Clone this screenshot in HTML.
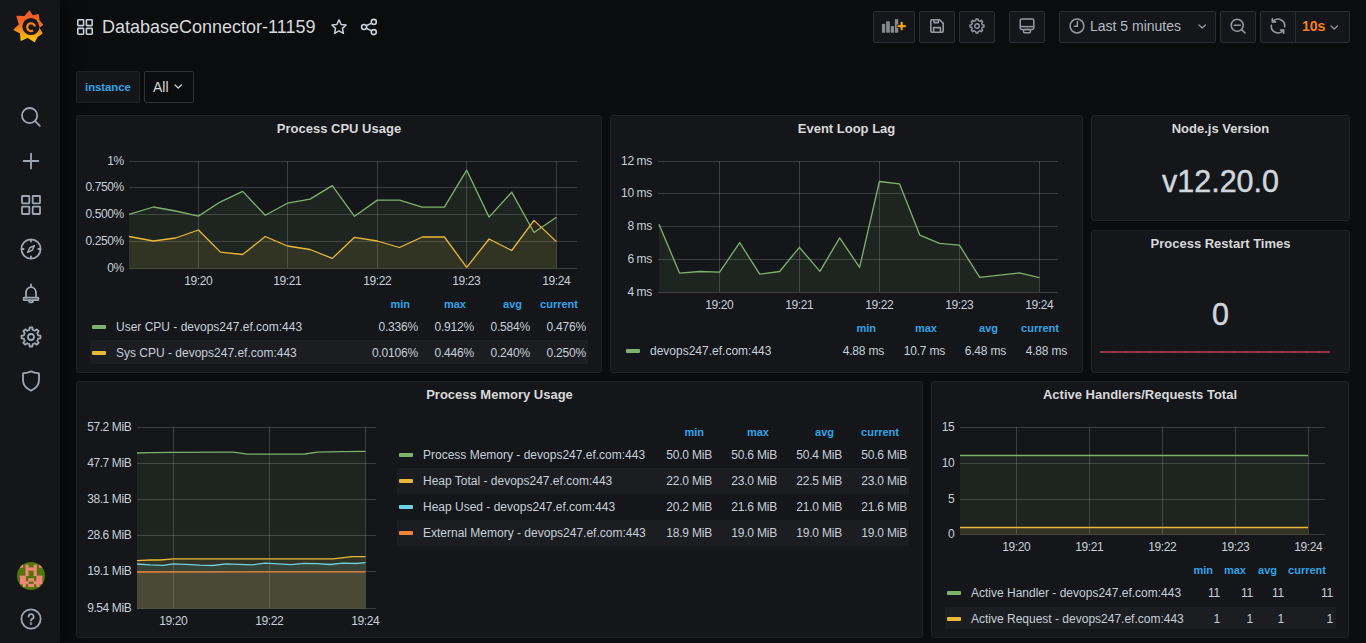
<!DOCTYPE html>
<html><head><meta charset="utf-8"><style>
*{margin:0;padding:0;box-sizing:border-box}
html,body{width:1366px;height:643px;overflow:hidden;background:#0b0c0e;font-family:"Liberation Sans", sans-serif;color:#c7d0d9}
.abs{position:absolute;white-space:nowrap}
.ov{position:absolute;left:0;top:0;pointer-events:none}
.side{position:absolute;left:0;top:0;width:60px;height:643px;background:#141619;box-shadow:0 0 20px rgba(0,0,0,0.7)}
.panel{position:absolute;background:#141619;border:1px solid #202226;border-radius:3px}
.ptitle{position:absolute;left:0;right:0;top:4px;text-align:center;font-size:13px;font-weight:bold;color:#d8d9da;line-height:18px}
.altrow{background:#1b1d21}
.lh{width:60px;text-align:right;font-size:11px;font-weight:bold;color:#33a2e5;line-height:14px}
.lt{font-size:12px;line-height:14px;color:#c7d0d9}
.lv{width:80px;text-align:right;font-size:12px;letter-spacing:-0.2px;line-height:14px;color:#c7d0d9}
.sw{width:14px;height:4px;border-radius:1px}
.stat{text-align:center;font-size:30.5px;color:#d0d6de;line-height:40px;-webkit-text-stroke:0.45px #d0d6de}
.btn{position:absolute;top:11px;height:32px;background:#141619;border:1px solid #2c2e33;border-radius:2px}
</style></head><body>
<div class="side"></div>
<svg class="abs" style="left:0;top:0" width="60" height="56" viewBox="0 0 60 56">
<defs><linearGradient id="lg" x1="0" y1="0.1" x2="0" y2="1"><stop offset="0" stop-color="#f05a28"/><stop offset="0.35" stop-color="#f26b24"/><stop offset="1" stop-color="#fbca0a"/></linearGradient></defs>
<path d="M29.4,11.1 L32.8,16.2 L38.3,14.7 L38.9,20.4 L42.5,24.8 L38.7,27.5 L42.0,33.2 L37.2,36.4 L34.4,41.6 L27.4,37.1 L21.2,40.2 L20.5,33.0 L14.2,29.8 L19.6,24.5 L17.0,16.4 L24.7,16.7Z" fill="url(#lg)" stroke="url(#lg)" stroke-width="1.2" stroke-linejoin="round"/>
<circle cx="31" cy="26.5" r="8.6" fill="#141619"/>
<path d="M37.36,20.14 A9,9 0 0 1 40.00,26.50" fill="none" stroke="#f26b24" stroke-width="1.6"/>
<path d="M34.94,26.52 A3.9,3.9 0 1 0 33.05,30.58" fill="none" stroke="#f5821f" stroke-width="2.3"/>
</svg><svg class="abs" style="left:19.0px;top:105.0px" width="24" height="24" viewBox="0 0 24 24" fill="none" stroke="#9fa7b3" stroke-width="1.8" stroke-linecap="round" stroke-linejoin="round"><circle cx="10.6" cy="10.6" r="7.6"/><line x1="16.2" y1="16.2" x2="20.8" y2="20.8"/></svg><svg class="abs" style="left:19.0px;top:149.0px" width="24" height="24" viewBox="0 0 24 24" fill="none" stroke="#9fa7b3" stroke-width="1.8" stroke-linecap="round" stroke-linejoin="round"><line x1="12" y1="4.6" x2="12" y2="19.4"/><line x1="4.6" y1="12" x2="19.4" y2="12"/></svg><svg class="abs" style="left:19.0px;top:192.5px" width="24" height="24" viewBox="0 0 24 24" fill="none" stroke="#9fa7b3" stroke-width="1.8" stroke-linecap="round" stroke-linejoin="round"><rect x="3" y="3" width="7.3" height="7.3" rx="0.5"/><rect x="13.7" y="3" width="7.3" height="7.3" rx="0.5"/><rect x="3" y="13.7" width="7.3" height="7.3" rx="0.5"/><rect x="13.7" y="13.7" width="7.3" height="7.3" rx="0.5"/></svg><svg class="abs" style="left:19.0px;top:237.0px" width="24" height="24" viewBox="0 0 24 24" fill="none" stroke="#9fa7b3" stroke-width="1.8" stroke-linecap="round" stroke-linejoin="round"><circle cx="12" cy="12" r="9.6"/><path d="M15.4,8.6 L13.2,13.2 L8.6,15.4 L10.8,10.8 Z" stroke-width="1.5"/><line x1="12" y1="3.2" x2="12" y2="4.6"/><line x1="12" y1="19.4" x2="12" y2="20.8"/><line x1="3.2" y1="12" x2="4.6" y2="12"/><line x1="19.4" y1="12" x2="20.8" y2="12"/></svg><svg class="abs" style="left:19.0px;top:281.0px" width="24" height="24" viewBox="0 0 24 24" fill="none" stroke="#9fa7b3" stroke-width="1.8" stroke-linecap="round" stroke-linejoin="round"><path d="M7,16.6 V11.5 A5,5.3 0 0 1 17,11.5 V16.6"/><rect x="4.6" y="16.6" width="14.8" height="2.6" rx="0.6"/><path d="M10,19.4 A2,2 0 0 0 14,19.4"/><line x1="12" y1="3.4" x2="12" y2="5.8"/></svg><svg class="abs" style="left:19.0px;top:325.0px" width="24" height="24" viewBox="0 0 24 24" fill="none" stroke="#9fa7b3" stroke-width="1.8" stroke-linecap="round" stroke-linejoin="round"><path d="M9.21,5.26 L10.30,4.90 L10.65,2.50 L13.35,2.50 L13.70,4.90 L14.79,5.26 L15.81,5.78 L17.76,4.32 L19.68,6.24 L18.22,8.19 L18.74,9.21 L19.10,10.30 L21.50,10.65 L21.50,13.35 L19.10,13.70 L18.74,14.79 L18.22,15.81 L19.68,17.76 L17.76,19.68 L15.81,18.22 L14.79,18.74 L13.70,19.10 L13.35,21.50 L10.65,21.50 L10.30,19.10 L9.21,18.74 L8.19,18.22 L6.24,19.68 L4.32,17.76 L5.78,15.81 L5.26,14.79 L4.90,13.70 L2.50,13.35 L2.50,10.65 L4.90,10.30 L5.26,9.21 L5.78,8.19 L4.32,6.24 L6.24,4.32 L8.19,5.78Z"/><circle cx="12" cy="12" r="3.0"/></svg><svg class="abs" style="left:19.0px;top:369.0px" width="24" height="24" viewBox="0 0 24 24" fill="none" stroke="#9fa7b3" stroke-width="1.8" stroke-linecap="round" stroke-linejoin="round"><path d="M12,2.4 L15.6,3.6 L20,4.4 V11 C20,16 16.5,19.5 12,21.6 C7.5,19.5 4,16 4,11 V4.4 L8.4,3.6 Z"/></svg><svg class="abs" style="left:17px;top:562px" width="28" height="28" viewBox="0 0 28 28"><defs><clipPath id="avc"><circle cx="14" cy="14" r="14"/></clipPath></defs><g clip-path="url(#avc)"><rect width="28" height="28" fill="#54740f"/><rect x="3.00" y="2.70" width="3.09" height="3.09" fill="#f4877a"/><rect x="8.48" y="2.70" width="3.09" height="3.09" fill="#f4877a"/><rect x="16.70" y="2.70" width="3.09" height="3.09" fill="#f4877a"/><rect x="22.18" y="2.70" width="3.09" height="3.09" fill="#f4877a"/><rect x="8.48" y="5.44" width="3.09" height="3.09" fill="#f4877a"/><rect x="11.22" y="5.44" width="3.09" height="3.09" fill="#f4877a"/><rect x="13.96" y="5.44" width="3.09" height="3.09" fill="#f4877a"/><rect x="16.70" y="5.44" width="3.09" height="3.09" fill="#f4877a"/><rect x="8.48" y="8.18" width="3.09" height="3.09" fill="#f4877a"/><rect x="16.70" y="8.18" width="3.09" height="3.09" fill="#f4877a"/><rect x="8.48" y="10.92" width="3.09" height="3.09" fill="#f4877a"/><rect x="16.70" y="10.92" width="3.09" height="3.09" fill="#f4877a"/><rect x="3.00" y="13.66" width="3.09" height="3.09" fill="#f4877a"/><rect x="5.74" y="13.66" width="3.09" height="3.09" fill="#f4877a"/><rect x="19.44" y="13.66" width="3.09" height="3.09" fill="#f4877a"/><rect x="22.18" y="13.66" width="3.09" height="3.09" fill="#f4877a"/><rect x="3.00" y="16.40" width="3.09" height="3.09" fill="#f4877a"/><rect x="5.74" y="16.40" width="3.09" height="3.09" fill="#f4877a"/><rect x="11.22" y="16.40" width="3.09" height="3.09" fill="#f4877a"/><rect x="13.96" y="16.40" width="3.09" height="3.09" fill="#f4877a"/><rect x="19.44" y="16.40" width="3.09" height="3.09" fill="#f4877a"/><rect x="22.18" y="16.40" width="3.09" height="3.09" fill="#f4877a"/><rect x="3.00" y="19.14" width="3.09" height="3.09" fill="#f4877a"/><rect x="5.74" y="19.14" width="3.09" height="3.09" fill="#f4877a"/><rect x="8.48" y="19.14" width="3.09" height="3.09" fill="#f4877a"/><rect x="16.70" y="19.14" width="3.09" height="3.09" fill="#f4877a"/><rect x="19.44" y="19.14" width="3.09" height="3.09" fill="#f4877a"/><rect x="22.18" y="19.14" width="3.09" height="3.09" fill="#f4877a"/><rect x="5.74" y="21.88" width="3.09" height="3.09" fill="#f4877a"/><rect x="11.22" y="21.88" width="3.09" height="3.09" fill="#f4877a"/><rect x="13.96" y="21.88" width="3.09" height="3.09" fill="#f4877a"/><rect x="19.44" y="21.88" width="3.09" height="3.09" fill="#f4877a"/></g></svg><svg class="abs" style="left:19.0px;top:607.0px" width="24" height="24" viewBox="0 0 24 24" fill="none" stroke="#9fa7b3" stroke-width="1.8" stroke-linecap="round" stroke-linejoin="round"><circle cx="12" cy="12" r="9.6"/><path d="M9.6,9.6 A2.5,2.5 0 1 1 13.2,11.9 C12.4,12.3 12,12.8 12,13.6" /><circle cx="12" cy="16.6" r="0.4" fill="#9fa7b3"/></svg>
<div class="panel" style="left:76px;top:115px;width:526px;height:258px"><div class="ptitle">Process CPU Usage</div></div><div class="panel" style="left:610px;top:115px;width:473px;height:258px"><div class="ptitle">Event Loop Lag</div></div><div class="panel" style="left:1091px;top:115px;width:259px;height:106px"><div class="ptitle">Node.js Version</div></div><div class="panel" style="left:1091px;top:230px;width:259px;height:143px"><div class="ptitle">Process Restart Times</div></div><div class="panel" style="left:76px;top:381px;width:847px;height:257px"><div class="ptitle">Process Memory Usage</div></div><div class="panel" style="left:931px;top:381px;width:418px;height:257px"><div class="ptitle">Active Handlers/Requests Total</div></div>
<svg class="ov" width="1366" height="643" viewBox="0 0 1366 643" font-family='"Liberation Sans", sans-serif'><line x1="129" y1="161.5" x2="577" y2="161.5" stroke="rgba(200,200,200,0.22)" stroke-width="1"/><line x1="129" y1="187.5" x2="577" y2="187.5" stroke="rgba(200,200,200,0.22)" stroke-width="1"/><line x1="129" y1="214.5" x2="577" y2="214.5" stroke="rgba(200,200,200,0.22)" stroke-width="1"/><line x1="129" y1="241.5" x2="577" y2="241.5" stroke="rgba(200,200,200,0.22)" stroke-width="1"/><line x1="129" y1="268.5" x2="577" y2="268.5" stroke="rgba(200,200,200,0.22)" stroke-width="1"/><line x1="198.5" y1="161" x2="198.5" y2="268" stroke="rgba(200,200,200,0.22)" stroke-width="1"/><line x1="287.5" y1="161" x2="287.5" y2="268" stroke="rgba(200,200,200,0.22)" stroke-width="1"/><line x1="377.5" y1="161" x2="377.5" y2="268" stroke="rgba(200,200,200,0.22)" stroke-width="1"/><line x1="466.5" y1="161" x2="466.5" y2="268" stroke="rgba(200,200,200,0.22)" stroke-width="1"/><line x1="556.5" y1="161" x2="556.5" y2="268" stroke="rgba(200,200,200,0.22)" stroke-width="1"/><path d="M129.1,214.3 L153.4,207.0 L175.6,211.0 L198.4,216.1 L220.5,201.8 L242.7,191.4 L265.2,215.3 L287.4,203.2 L310.0,199.1 L332.3,185.6 L354.5,216.3 L377.3,200.1 L399.5,200.1 L422.2,207.2 L444.4,207.2 L466.7,170.2 L489.1,217.1 L511.7,192.1 L534.0,232.5 L556.4,217.3 L556.4,268.5 L129.1,268.5 Z" fill="#7eb26d" fill-opacity="0.1"/><path d="M129.1,214.3 L153.4,207.0 L175.6,211.0 L198.4,216.1 L220.5,201.8 L242.7,191.4 L265.2,215.3 L287.4,203.2 L310.0,199.1 L332.3,185.6 L354.5,216.3 L377.3,200.1 L399.5,200.1 L422.2,207.2 L444.4,207.2 L466.7,170.2 L489.1,217.1 L511.7,192.1 L534.0,232.5 L556.4,217.3" fill="none" stroke="#7eb26d" stroke-width="1.3" stroke-linejoin="round"/><path d="M129.1,236.5 L153.4,241.0 L175.6,238.0 L198.4,230.0 L220.5,252.1 L242.7,254.5 L265.2,236.5 L287.4,246.0 L310.0,249.5 L332.3,258.4 L354.5,237.3 L377.3,241.0 L399.5,247.5 L422.2,237.0 L444.4,237.0 L466.7,267.3 L489.1,239.0 L511.7,250.5 L534.0,220.4 L556.4,241.6 L556.4,268.5 L129.1,268.5 Z" fill="#eab839" fill-opacity="0.1"/><path d="M129.1,236.5 L153.4,241.0 L175.6,238.0 L198.4,230.0 L220.5,252.1 L242.7,254.5 L265.2,236.5 L287.4,246.0 L310.0,249.5 L332.3,258.4 L354.5,237.3 L377.3,241.0 L399.5,247.5 L422.2,237.0 L444.4,237.0 L466.7,267.3 L489.1,239.0 L511.7,250.5 L534.0,220.4 L556.4,241.6" fill="none" stroke="#eab839" stroke-width="1.3" stroke-linejoin="round"/><text x="123.8" y="165.0" text-anchor="end" font-size="12" fill="#c7d0d9" font-weight="normal" letter-spacing="-0.4">1%</text><text x="123.8" y="191.0" text-anchor="end" font-size="12" fill="#c7d0d9" font-weight="normal" letter-spacing="-0.4">0.750%</text><text x="123.8" y="218.0" text-anchor="end" font-size="12" fill="#c7d0d9" font-weight="normal" letter-spacing="-0.4">0.500%</text><text x="123.8" y="245.0" text-anchor="end" font-size="12" fill="#c7d0d9" font-weight="normal" letter-spacing="-0.4">0.250%</text><text x="123.8" y="272.0" text-anchor="end" font-size="12" fill="#c7d0d9" font-weight="normal" letter-spacing="-0.4">0%</text><text x="198.3" y="285.0" text-anchor="middle" font-size="12" fill="#c7d0d9" font-weight="normal" letter-spacing="-0.4">19:20</text><text x="287.3" y="285.0" text-anchor="middle" font-size="12" fill="#c7d0d9" font-weight="normal" letter-spacing="-0.4">19:21</text><text x="377.3" y="285.0" text-anchor="middle" font-size="12" fill="#c7d0d9" font-weight="normal" letter-spacing="-0.4">19:22</text><text x="466.3" y="285.0" text-anchor="middle" font-size="12" fill="#c7d0d9" font-weight="normal" letter-spacing="-0.4">19:23</text><text x="556.3" y="285.0" text-anchor="middle" font-size="12" fill="#c7d0d9" font-weight="normal" letter-spacing="-0.4">19:24</text><line x1="658" y1="161.5" x2="1058" y2="161.5" stroke="rgba(200,200,200,0.22)" stroke-width="1"/><line x1="658" y1="193.5" x2="1058" y2="193.5" stroke="rgba(200,200,200,0.22)" stroke-width="1"/><line x1="658" y1="226.5" x2="1058" y2="226.5" stroke="rgba(200,200,200,0.22)" stroke-width="1"/><line x1="658" y1="259.5" x2="1058" y2="259.5" stroke="rgba(200,200,200,0.22)" stroke-width="1"/><line x1="658" y1="292.5" x2="1058" y2="292.5" stroke="rgba(200,200,200,0.22)" stroke-width="1"/><line x1="719.5" y1="161" x2="719.5" y2="292" stroke="rgba(200,200,200,0.22)" stroke-width="1"/><line x1="799.5" y1="161" x2="799.5" y2="292" stroke="rgba(200,200,200,0.22)" stroke-width="1"/><line x1="879.5" y1="161" x2="879.5" y2="292" stroke="rgba(200,200,200,0.22)" stroke-width="1"/><line x1="959.5" y1="161" x2="959.5" y2="292" stroke="rgba(200,200,200,0.22)" stroke-width="1"/><line x1="1039.5" y1="161" x2="1039.5" y2="292" stroke="rgba(200,200,200,0.22)" stroke-width="1"/><path d="M659.0,224.2 L679.5,273.1 L699.8,271.5 L719.6,272.2 L739.7,242.6 L759.7,274.1 L779.6,271.5 L799.4,247.3 L819.9,271.3 L839.7,237.9 L859.6,267.3 L879.4,181.5 L899.5,183.8 L919.8,235.1 L939.6,243.3 L959.4,245.2 L979.7,277.3 L999.6,275.2 L1019.4,272.9 L1039.4,277.6 L1039.4,292.5 L659.0,292.5 Z" fill="#7eb26d" fill-opacity="0.1"/><path d="M659.0,224.2 L679.5,273.1 L699.8,271.5 L719.6,272.2 L739.7,242.6 L759.7,274.1 L779.6,271.5 L799.4,247.3 L819.9,271.3 L839.7,237.9 L859.6,267.3 L879.4,181.5 L899.5,183.8 L919.8,235.1 L939.6,243.3 L959.4,245.2 L979.7,277.3 L999.6,275.2 L1019.4,272.9 L1039.4,277.6" fill="none" stroke="#7eb26d" stroke-width="1.3" stroke-linejoin="round"/><text x="651.8" y="165.0" text-anchor="end" font-size="12" fill="#c7d0d9" font-weight="normal" letter-spacing="-0.4">12 ms</text><text x="651.8" y="197.0" text-anchor="end" font-size="12" fill="#c7d0d9" font-weight="normal" letter-spacing="-0.4">10 ms</text><text x="651.8" y="230.0" text-anchor="end" font-size="12" fill="#c7d0d9" font-weight="normal" letter-spacing="-0.4">8 ms</text><text x="651.8" y="263.0" text-anchor="end" font-size="12" fill="#c7d0d9" font-weight="normal" letter-spacing="-0.4">6 ms</text><text x="651.8" y="296.0" text-anchor="end" font-size="12" fill="#c7d0d9" font-weight="normal" letter-spacing="-0.4">4 ms</text><text x="719.3" y="309.0" text-anchor="middle" font-size="12" fill="#c7d0d9" font-weight="normal" letter-spacing="-0.4">19:20</text><text x="799.3" y="309.0" text-anchor="middle" font-size="12" fill="#c7d0d9" font-weight="normal" letter-spacing="-0.4">19:21</text><text x="879.3" y="309.0" text-anchor="middle" font-size="12" fill="#c7d0d9" font-weight="normal" letter-spacing="-0.4">19:22</text><text x="959.3" y="309.0" text-anchor="middle" font-size="12" fill="#c7d0d9" font-weight="normal" letter-spacing="-0.4">19:23</text><text x="1039.3" y="309.0" text-anchor="middle" font-size="12" fill="#c7d0d9" font-weight="normal" letter-spacing="-0.4">19:24</text><line x1="137" y1="427.5" x2="376" y2="427.5" stroke="rgba(200,200,200,0.22)" stroke-width="1"/><line x1="137" y1="463.5" x2="376" y2="463.5" stroke="rgba(200,200,200,0.22)" stroke-width="1"/><line x1="137" y1="499.5" x2="376" y2="499.5" stroke="rgba(200,200,200,0.22)" stroke-width="1"/><line x1="137" y1="535.5" x2="376" y2="535.5" stroke="rgba(200,200,200,0.22)" stroke-width="1"/><line x1="137" y1="571.5" x2="376" y2="571.5" stroke="rgba(200,200,200,0.22)" stroke-width="1"/><line x1="137" y1="608.5" x2="376" y2="608.5" stroke="rgba(200,200,200,0.22)" stroke-width="1"/><line x1="173.5" y1="427" x2="173.5" y2="608" stroke="rgba(200,200,200,0.22)" stroke-width="1"/><line x1="269.5" y1="427" x2="269.5" y2="608" stroke="rgba(200,200,200,0.22)" stroke-width="1"/><line x1="365.5" y1="427" x2="365.5" y2="608" stroke="rgba(200,200,200,0.22)" stroke-width="1"/><path d="M137.0,453.0 L150.0,452.6 L173.0,452.4 L220.0,452.2 L233.5,452.2 L247.4,454.2 L305.0,454.0 L317.4,452.2 L340.0,451.6 L365.4,451.4 L365.4,608.5 L137.0,608.5 Z" fill="#7eb26d" fill-opacity="0.1"/><path d="M137.0,453.0 L150.0,452.6 L173.0,452.4 L220.0,452.2 L233.5,452.2 L247.4,454.2 L305.0,454.0 L317.4,452.2 L340.0,451.6 L365.4,451.4" fill="none" stroke="#7eb26d" stroke-width="1.3" stroke-linejoin="round"/><path d="M137.0,560.6 L150.0,560.0 L160.0,560.0 L173.6,558.8 L333.0,558.8 L352.0,556.6 L365.4,556.6 L365.4,608.5 L137.0,608.5 Z" fill="#eab839" fill-opacity="0.1"/><path d="M137.0,560.6 L150.0,560.0 L160.0,560.0 L173.6,558.8 L333.0,558.8 L352.0,556.6 L365.4,556.6" fill="none" stroke="#eab839" stroke-width="1.3" stroke-linejoin="round"/><path d="M137.0,564.0 L150.0,564.8 L163.0,565.3 L173.0,563.8 L186.0,564.3 L200.0,565.2 L213.0,565.5 L226.0,563.8 L239.0,564.4 L252.0,564.9 L265.0,563.2 L278.0,563.8 L291.0,564.7 L304.0,563.3 L317.0,563.6 L330.0,564.5 L343.0,563.2 L356.0,563.5 L365.4,562.6 L365.4,608.5 L137.0,608.5 Z" fill="#6ed0e0" fill-opacity="0.1"/><path d="M137.0,564.0 L150.0,564.8 L163.0,565.3 L173.0,563.8 L186.0,564.3 L200.0,565.2 L213.0,565.5 L226.0,563.8 L239.0,564.4 L252.0,564.9 L265.0,563.2 L278.0,563.8 L291.0,564.7 L304.0,563.3 L317.0,563.6 L330.0,564.5 L343.0,563.2 L356.0,563.5 L365.4,562.6" fill="none" stroke="#6ed0e0" stroke-width="1.3" stroke-linejoin="round"/><path d="M137.0,572.0 L365.4,571.8 L365.4,608.5 L137.0,608.5 Z" fill="#ef843c" fill-opacity="0.1"/><path d="M137.0,572.0 L365.4,571.8" fill="none" stroke="#ef843c" stroke-width="1.3" stroke-linejoin="round"/><text x="131.3" y="430.8" text-anchor="end" font-size="12" fill="#c7d0d9" font-weight="normal" letter-spacing="-0.4">57.2 MiB</text><text x="131.3" y="466.8" text-anchor="end" font-size="12" fill="#c7d0d9" font-weight="normal" letter-spacing="-0.4">47.7 MiB</text><text x="131.3" y="502.8" text-anchor="end" font-size="12" fill="#c7d0d9" font-weight="normal" letter-spacing="-0.4">38.1 MiB</text><text x="131.3" y="538.8" text-anchor="end" font-size="12" fill="#c7d0d9" font-weight="normal" letter-spacing="-0.4">28.6 MiB</text><text x="131.3" y="574.8" text-anchor="end" font-size="12" fill="#c7d0d9" font-weight="normal" letter-spacing="-0.4">19.1 MiB</text><text x="131.3" y="611.8" text-anchor="end" font-size="12" fill="#c7d0d9" font-weight="normal" letter-spacing="-0.4">9.54 MiB</text><text x="173.3" y="624.5" text-anchor="middle" font-size="12" fill="#c7d0d9" font-weight="normal" letter-spacing="-0.4">19:20</text><text x="269.3" y="624.5" text-anchor="middle" font-size="12" fill="#c7d0d9" font-weight="normal" letter-spacing="-0.4">19:22</text><text x="365.3" y="624.5" text-anchor="middle" font-size="12" fill="#c7d0d9" font-weight="normal" letter-spacing="-0.4">19:24</text><line x1="960" y1="427.5" x2="1325" y2="427.5" stroke="rgba(200,200,200,0.22)" stroke-width="1"/><line x1="960" y1="463.5" x2="1325" y2="463.5" stroke="rgba(200,200,200,0.22)" stroke-width="1"/><line x1="960" y1="499.5" x2="1325" y2="499.5" stroke="rgba(200,200,200,0.22)" stroke-width="1"/><line x1="960" y1="534.5" x2="1325" y2="534.5" stroke="rgba(200,200,200,0.22)" stroke-width="1"/><line x1="1016.5" y1="427" x2="1016.5" y2="534" stroke="rgba(200,200,200,0.22)" stroke-width="1"/><line x1="1089.5" y1="427" x2="1089.5" y2="534" stroke="rgba(200,200,200,0.22)" stroke-width="1"/><line x1="1162.5" y1="427" x2="1162.5" y2="534" stroke="rgba(200,200,200,0.22)" stroke-width="1"/><line x1="1235.5" y1="427" x2="1235.5" y2="534" stroke="rgba(200,200,200,0.22)" stroke-width="1"/><line x1="1308.5" y1="427" x2="1308.5" y2="534" stroke="rgba(200,200,200,0.22)" stroke-width="1"/><path d="M960.0,455.5 L1308.0,455.5 L1308.0,534.5 L960.0,534.5 Z" fill="#7eb26d" fill-opacity="0.1"/><path d="M960.0,455.5 L1308.0,455.5" fill="none" stroke="#7eb26d" stroke-width="1.3" stroke-linejoin="round"/><path d="M960.0,527.5 L1308.0,527.5 L1308.0,534.5 L960.0,534.5 Z" fill="#eab839" fill-opacity="0.1"/><path d="M960.0,527.5 L1308.0,527.5" fill="none" stroke="#eab839" stroke-width="1.3" stroke-linejoin="round"/><text x="954.3" y="431.0" text-anchor="end" font-size="12" fill="#c7d0d9" font-weight="normal" letter-spacing="-0.4">15</text><text x="954.3" y="467.0" text-anchor="end" font-size="12" fill="#c7d0d9" font-weight="normal" letter-spacing="-0.4">10</text><text x="954.3" y="503.0" text-anchor="end" font-size="12" fill="#c7d0d9" font-weight="normal" letter-spacing="-0.4">5</text><text x="954.3" y="538.0" text-anchor="end" font-size="12" fill="#c7d0d9" font-weight="normal" letter-spacing="-0.4">0</text><text x="1016.3" y="551.0" text-anchor="middle" font-size="12" fill="#c7d0d9" font-weight="normal" letter-spacing="-0.4">19:20</text><text x="1089.3" y="551.0" text-anchor="middle" font-size="12" fill="#c7d0d9" font-weight="normal" letter-spacing="-0.4">19:21</text><text x="1162.3" y="551.0" text-anchor="middle" font-size="12" fill="#c7d0d9" font-weight="normal" letter-spacing="-0.4">19:22</text><text x="1235.3" y="551.0" text-anchor="middle" font-size="12" fill="#c7d0d9" font-weight="normal" letter-spacing="-0.4">19:23</text><text x="1308.3" y="551.0" text-anchor="middle" font-size="12" fill="#c7d0d9" font-weight="normal" letter-spacing="-0.4">19:24</text><line x1="1100" y1="352" x2="1330" y2="352" stroke="#dc4d61" stroke-opacity="0.6" stroke-width="2"/><circle cx="1101.5" cy="352" r="0.9" fill="#f06070" fill-opacity="0.3"/><circle cx="1113.6" cy="352" r="0.9" fill="#f06070" fill-opacity="0.3"/><circle cx="1125.6" cy="352" r="0.9" fill="#f06070" fill-opacity="0.3"/><circle cx="1137.7" cy="352" r="0.9" fill="#f06070" fill-opacity="0.3"/><circle cx="1149.8" cy="352" r="0.9" fill="#f06070" fill-opacity="0.3"/><circle cx="1161.8" cy="352" r="0.9" fill="#f06070" fill-opacity="0.3"/><circle cx="1173.9" cy="352" r="0.9" fill="#f06070" fill-opacity="0.3"/><circle cx="1186.0" cy="352" r="0.9" fill="#f06070" fill-opacity="0.3"/><circle cx="1198.1" cy="352" r="0.9" fill="#f06070" fill-opacity="0.3"/><circle cx="1210.1" cy="352" r="0.9" fill="#f06070" fill-opacity="0.3"/><circle cx="1222.2" cy="352" r="0.9" fill="#f06070" fill-opacity="0.3"/><circle cx="1234.3" cy="352" r="0.9" fill="#f06070" fill-opacity="0.3"/><circle cx="1246.3" cy="352" r="0.9" fill="#f06070" fill-opacity="0.3"/><circle cx="1258.4" cy="352" r="0.9" fill="#f06070" fill-opacity="0.3"/><circle cx="1270.5" cy="352" r="0.9" fill="#f06070" fill-opacity="0.3"/><circle cx="1282.5" cy="352" r="0.9" fill="#f06070" fill-opacity="0.3"/><circle cx="1294.6" cy="352" r="0.9" fill="#f06070" fill-opacity="0.3"/><circle cx="1306.7" cy="352" r="0.9" fill="#f06070" fill-opacity="0.3"/><circle cx="1318.8" cy="352" r="0.9" fill="#f06070" fill-opacity="0.3"/></svg>
<div class="abs altrow" style="left:90px;top:340px;width:498px;height:24px"></div><div class="abs lh" style="left:350px;top:297px">min</div><div class="abs lh" style="left:406px;top:297px">max</div><div class="abs lh" style="left:462px;top:297px">avg</div><div class="abs lh" style="left:518px;top:297px">current</div><div class="abs sw" style="left:92px;top:325.3px;background:#7eb26d"></div><div class="abs lt" style="left:116px;top:320.3px">User CPU - devops247.ef.com:443</div><div class="abs lv" style="left:338px;top:320.3px">0.336%</div><div class="abs lv" style="left:394px;top:320.3px">0.912%</div><div class="abs lv" style="left:450px;top:320.3px">0.584%</div><div class="abs lv" style="left:506px;top:320.3px">0.476%</div><div class="abs sw" style="left:92px;top:350.8px;background:#eab839"></div><div class="abs lt" style="left:116px;top:345.8px">Sys CPU - devops247.ef.com:443</div><div class="abs lv" style="left:338px;top:345.8px">0.0106%</div><div class="abs lv" style="left:394px;top:345.8px">0.446%</div><div class="abs lv" style="left:450px;top:345.8px">0.240%</div><div class="abs lv" style="left:506px;top:345.8px">0.250%</div><div class="abs lh" style="left:816px;top:321px">min</div><div class="abs lh" style="left:877px;top:321px">max</div><div class="abs lh" style="left:938px;top:321px">avg</div><div class="abs lh" style="left:999px;top:321px">current</div><div class="abs sw" style="left:626px;top:349.4px;background:#7eb26d"></div><div class="abs lt" style="left:650px;top:344.4px">devops247.ef.com:443</div><div class="abs lv" style="left:804px;top:344.4px">4.88 ms</div><div class="abs lv" style="left:865px;top:344.4px">10.7 ms</div><div class="abs lv" style="left:926px;top:344.4px">6.48 ms</div><div class="abs lv" style="left:987px;top:344.4px">4.88 ms</div><div class="abs altrow" style="left:397px;top:468px;width:512px;height:26px"></div><div class="abs altrow" style="left:397px;top:520px;width:512px;height:26px"></div><div class="abs lh" style="left:644px;top:425px">min</div><div class="abs lh" style="left:709px;top:425px">max</div><div class="abs lh" style="left:774px;top:425px">avg</div><div class="abs lh" style="left:839px;top:425px">current</div><div class="abs sw" style="left:399px;top:453.1px;background:#7eb26d"></div><div class="abs lt" style="left:423px;top:448.1px">Process Memory - devops247.ef.com:443</div><div class="abs lv" style="left:632px;top:448.1px">50.0 MiB</div><div class="abs lv" style="left:697px;top:448.1px">50.6 MiB</div><div class="abs lv" style="left:762px;top:448.1px">50.4 MiB</div><div class="abs lv" style="left:827px;top:448.1px">50.6 MiB</div><div class="abs sw" style="left:399px;top:478.9px;background:#eab839"></div><div class="abs lt" style="left:423px;top:473.9px">Heap Total - devops247.ef.com:443</div><div class="abs lv" style="left:632px;top:473.9px">22.0 MiB</div><div class="abs lv" style="left:697px;top:473.9px">23.0 MiB</div><div class="abs lv" style="left:762px;top:473.9px">22.5 MiB</div><div class="abs lv" style="left:827px;top:473.9px">23.0 MiB</div><div class="abs sw" style="left:399px;top:505px;background:#6ed0e0"></div><div class="abs lt" style="left:423px;top:500px">Heap Used - devops247.ef.com:443</div><div class="abs lv" style="left:632px;top:500px">20.2 MiB</div><div class="abs lv" style="left:697px;top:500px">21.6 MiB</div><div class="abs lv" style="left:762px;top:500px">21.0 MiB</div><div class="abs lv" style="left:827px;top:500px">21.6 MiB</div><div class="abs sw" style="left:399px;top:530.8px;background:#ef843c"></div><div class="abs lt" style="left:423px;top:525.8px">External Memory - devops247.ef.com:443</div><div class="abs lv" style="left:632px;top:525.8px">18.9 MiB</div><div class="abs lv" style="left:697px;top:525.8px">19.0 MiB</div><div class="abs lv" style="left:762px;top:525.8px">19.0 MiB</div><div class="abs lv" style="left:827px;top:525.8px">19.0 MiB</div><div class="abs altrow" style="left:945px;top:606.6px;width:391px;height:22.799999999999955px"></div><div class="abs lh" style="left:1153px;top:562.6px">min</div><div class="abs lh" style="left:1186px;top:562.6px">max</div><div class="abs lh" style="left:1217px;top:562.6px">avg</div><div class="abs lh" style="left:1266px;top:562.6px">current</div><div class="abs sw" style="left:947px;top:591px;background:#7eb26d"></div><div class="abs lt" style="left:971px;top:586px">Active Handler - devops247.ef.com:443</div><div class="abs lv" style="left:1140px;top:586px">11</div><div class="abs lv" style="left:1173px;top:586px">11</div><div class="abs lv" style="left:1204px;top:586px">11</div><div class="abs lv" style="left:1253px;top:586px">11</div><div class="abs sw" style="left:947px;top:616.8px;background:#eab839"></div><div class="abs lt" style="left:971px;top:611.8px">Active Request - devops247.ef.com:443</div><div class="abs lv" style="left:1140px;top:611.8px">1</div><div class="abs lv" style="left:1173px;top:611.8px">1</div><div class="abs lv" style="left:1204px;top:611.8px">1</div><div class="abs lv" style="left:1253px;top:611.8px">1</div>
<div class="abs stat" style="left:1091px;top:161px;width:259px">v12.20.0</div>
<div class="abs stat" style="left:1091px;top:294px;width:259px">0</div>
<div class="abs" style="left:102px;top:16px;font-size:18px;color:#d8d9da;line-height:22px">DatabaseConnector-11159</div>
<div class="abs" style="left:76px;top:71px;width:64px;height:32px;background:#141619;border:1px solid #202226;border-radius:2px"></div>
<div class="abs" style="left:85px;top:80px;font-size:11.3px;font-weight:bold;color:#33a2e5;line-height:14px">instance</div>
<div class="abs" style="left:144px;top:71px;width:50px;height:32px;background:#0b0c0e;border:1px solid #2c3235;border-radius:2px"></div>
<div class="abs" style="left:153px;top:79px;font-size:14px;color:#d8d9da;line-height:16px">All</div>
<div class="btn" style="left:873px;width:42px"></div>
<div class="btn" style="left:919px;width:36px"></div>
<div class="btn" style="left:959px;width:36px"></div>
<div class="btn" style="left:1009px;width:36px"></div>
<div class="btn" style="left:1059px;width:157px"></div>
<div class="abs" style="left:1090px;top:18px;font-size:14px;color:#b4bbc5;line-height:16px">Last 5 minutes</div>
<div class="btn" style="left:1220px;width:36px"></div>
<div class="btn" style="left:1260px;width:90px"></div><div class="abs" style="left:1295px;top:12px;width:1px;height:30px;background:#2c2e33"></div>
<div class="abs" style="left:1302px;top:18px;font-size:14px;font-weight:bold;color:#f7801a;line-height:16px">10s</div>
<svg class="abs" style="left:76px;top:18px" width="18" height="18" viewBox="0 0 18 18" fill="none" stroke="#c7d0d9" stroke-width="1.6"><rect x="1.8" y="1.8" width="5.8" height="5.8" rx="0.6"/><rect x="10.4" y="1.8" width="5.8" height="5.8" rx="0.6"/><rect x="1.8" y="10.4" width="5.8" height="5.8" rx="0.6"/><rect x="10.4" y="10.4" width="5.8" height="5.8" rx="0.6"/></svg><svg class="abs" style="left:330px;top:18px" width="18" height="18" viewBox="0 0 24 24" fill="none" stroke="#c7d0d9" stroke-width="2" stroke-linejoin="round"><path d="M12,2.5 L14.9,8.6 L21.5,9.4 L16.6,13.9 L17.9,20.5 L12,17.2 L6.1,20.5 L7.4,13.9 L2.5,9.4 L9.1,8.6 Z"/></svg><svg class="abs" style="left:360px;top:18px" width="18" height="18" viewBox="0 0 18 18" fill="none" stroke="#c7d0d9" stroke-width="1.6"><circle cx="13.8" cy="3.9" r="2.5"/><circle cx="4.1" cy="9" r="2.5"/><circle cx="13.8" cy="14.1" r="2.5"/><line x1="6.3" y1="7.8" x2="11.6" y2="5.1"/><line x1="6.3" y1="10.2" x2="11.6" y2="12.9"/></svg><svg class="abs" style="left:881px;top:18px" width="27" height="16" viewBox="0 0 27 16"><rect x="0.9" y="5.9" width="3.3" height="8.8" fill="#868b92"/><rect x="5.2" y="3.3" width="3.6" height="11.4" fill="#868b92"/><rect x="9.7" y="8.1" width="3.3" height="6.6" fill="#868b92"/><rect x="13.9" y="1.2" width="3.4" height="13.5" fill="#868b92"/><path d="M19.2,3.5 h2.9 v3.2 h3.1 v2.9 h-3.1 v2.8 h-2.9 v-2.8 h-3.1 v-2.9 h3.1 z" fill="#f9a81c" stroke="#141619" stroke-width="0.8"/></svg><svg class="abs" style="left:929px;top:18px" width="16" height="16" viewBox="0 0 16 16" fill="none" stroke="#959aa2" stroke-width="1.6" stroke-linejoin="round"><path d="M2.2,1.8 H10.6 L14.2,5.4 V13 A1.2,1.2 0 0 1 13,14.2 H3 A1.2,1.2 0 0 1 1.8,13 V3 A1.2,1.2 0 0 1 3,1.8 Z"/><path d="M5,2 V4.6 H9.4 V2"/><path d="M4.6,14 V9.6 H11.4 V14"/></svg><svg class="abs" style="left:969px;top:18px" width="16" height="16" viewBox="0 0 24 24" fill="none" stroke="#959aa2" stroke-width="2.1" stroke-linejoin="round"><path d="M8.86,4.42 L10.09,4.03 L10.51,1.51 L13.49,1.51 L13.91,4.03 L15.14,4.42 L16.28,5.01 L18.36,3.52 L20.48,5.64 L18.99,7.72 L19.58,8.86 L19.97,10.09 L22.49,10.51 L22.49,13.49 L19.97,13.91 L19.58,15.14 L18.99,16.28 L20.48,18.36 L18.36,20.48 L16.28,18.99 L15.14,19.58 L13.91,19.97 L13.49,22.49 L10.51,22.49 L10.09,19.97 L8.86,19.58 L7.72,18.99 L5.64,20.48 L3.52,18.36 L5.01,16.28 L4.42,15.14 L4.03,13.91 L1.51,13.49 L1.51,10.51 L4.03,10.09 L4.42,8.86 L5.01,7.72 L3.52,5.64 L5.64,3.52 L7.72,5.01Z"/><circle cx="12" cy="12" r="3.4"/></svg><svg class="abs" style="left:1019px;top:18px" width="16" height="16" viewBox="0 0 16 16" fill="none" stroke="#959aa2" stroke-width="1.5" stroke-linejoin="round"><rect x="1.2" y="1" width="13.6" height="10.4" rx="1.6"/><line x1="1.2" y1="8.6" x2="14.8" y2="8.6"/><rect x="4.5" y="11.6" width="7" height="3.2" rx="1.2"/></svg><svg class="abs" style="left:1069px;top:18px" width="16" height="16" viewBox="0 0 16 16" fill="none" stroke="#959aa2" stroke-width="1.5" stroke-linecap="round"><circle cx="8" cy="8" r="6.9"/><path d="M8.4,3.6 V8.2 H5.4"/></svg><svg class="abs" style="left:1197.6px;top:23.6px" width="8.4" height="5" viewBox="0 0 10 6" fill="none" stroke="#959aa2" stroke-width="1.5" stroke-linecap="round" stroke-linejoin="round"><path d="M1.2,1.2 L5,4.8 L8.8,1.2"/></svg><svg class="abs" style="left:1230px;top:18px" width="16" height="16" viewBox="0 0 16 16" fill="none" stroke="#959aa2" stroke-width="1.6" stroke-linecap="round"><circle cx="7.2" cy="7.2" r="6"/><line x1="11.6" y1="11.6" x2="15" y2="15"/><line x1="4.2" y1="7.2" x2="10.2" y2="7.2"/></svg><svg class="abs" style="left:1270px;top:18px" width="16" height="16" viewBox="0 0 16 16" fill="none" stroke="#959aa2" stroke-width="1.6" stroke-linecap="round" stroke-linejoin="round"><path d="M14.6,8.6 A6.6,6.6 0 0 0 2.9,3.6"/><path d="M1.4,7.4 A6.6,6.6 0 0 0 13.1,12.4"/><path d="M2.4,0.9 V3.9 H5.4" stroke-width="1.8"/><path d="M13.6,15.1 V12.1 H10.6" stroke-width="1.8"/></svg><svg class="abs" style="left:1329.8px;top:24.5px" width="8.4" height="5" viewBox="0 0 10 6" fill="none" stroke="#959aa2" stroke-width="1.5" stroke-linecap="round" stroke-linejoin="round"><path d="M1.2,1.2 L5,4.8 L8.8,1.2"/></svg>
<svg class="abs" style="left:173.5px;top:84.2px" width="8.4" height="5" viewBox="0 0 10 6" fill="none" stroke="#c7d0d9" stroke-width="1.5" stroke-linecap="round" stroke-linejoin="round"><path d="M1.2,1.2 L5,4.8 L8.8,1.2"/></svg>
</body></html>
